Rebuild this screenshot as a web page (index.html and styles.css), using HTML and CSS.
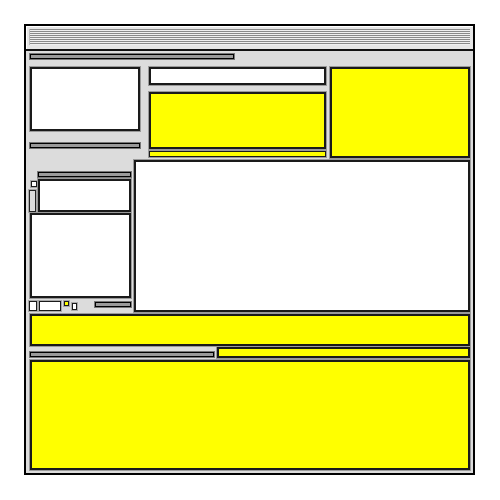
FILE: index.html
```html
<!DOCTYPE html>
<html>
<head>
<meta charset="utf-8">
<link rel="stylesheet" href="styles.css">
</head>
<body>
<div class="window">
  <div class="titlebar"><div class="stripes"></div></div>
  <div class="content">
    <div class="bar topbar"></div>
    <div class="row-b">
      <div class="col-left">
        <div class="box white lbox"></div>
        <div class="bar lbar"></div>
      </div>
      <div class="col-mid">
        <div class="box white input"></div>
        <div class="box yellow mbox"></div>
        <div class="box yellow mbar"></div>
      </div>
      <div class="box yellow rbox"></div>
    </div>
    <div class="row-c">
      <div class="side">
        <div class="sub">
          <div class="strip">
            <div class="tiny sq"></div>
            <div class="tiny tall"></div>
          </div>
          <div class="submain">
            <div class="bar subbar"></div>
            <div class="box white subbox"></div>
          </div>
        </div>
        <div class="box white bigleft"></div>
        <div class="bottomrow">
          <div class="tiny b1"></div>
          <div class="tiny b2"></div>
          <div class="tiny b3"></div>
          <div class="tiny b4"></div>
          <div class="bar b5"></div>
        </div>
      </div>
      <div class="box white main"></div>
    </div>
    <div class="box yellow band"></div>
    <div class="row-e">
      <div class="bar ebar"></div>
      <div class="box yellow eright"></div>
    </div>
    <div class="box yellow bottom"></div>
  </div>
</div>
</body>
</html>
```
FILE: styles.css
```css
* { box-sizing: border-box; }
html, body { margin: 0; padding: 0; background: #fff; }
body { width: 500px; height: 500px; font-family: "Liberation Sans", sans-serif; }

.window {
  margin: 24px 0 0 24px;
  width: 451px;
  height: 451px;
  border: 2px solid #000;
  background: #dcdcdc;
  box-shadow: inset 1px 1px 0 #fff, inset -1px -1px 0 #808080, inset -2px -2px 0 #bbb;
  display: flex;
  flex-direction: column;
}
.titlebar {
  height: 25px;
  background: #e6e6e6;
  border-bottom: 2px solid #111;
  padding: 3px 3px 3px 3px;
  box-shadow: inset 1px 1px 0 #fff;
}
.stripes {
  height: 16px;
  background: repeating-linear-gradient(to bottom, #8a8a8a 0 1px, #f0f0f0 1px 2px);
  border-left: 1px solid #bbb;
}
.content {
  flex: 1;
  padding: 3px 3px 3px 4px;
  display: flex;
  flex-direction: column;
  background: #dcdcdc;
}
.box {
  border: 2px solid #1a1a1a;
  box-shadow: 0 0 0 1px #9a9a9a;
}
.white { background: #fff; }
.yellow { background: #ffff00; }
.bar {
  height: 5px;
  border: 1px solid #000;
  background: #9a9a9a;
  box-shadow: 0 0 0 1px #777;
}
.tiny {
  border: 1px solid #1a1a1a;
  background: #fff;
  box-shadow: 0 0 0 1px #aaa;
}

.topbar { width: 204px; }

.row-b {
  margin-top: 8px;
  height: 91px;
  display: flex;
  gap: 4px;
}
.col-left {
  width: 110px;
  margin-right: 5px;
  display: flex;
  flex-direction: column;
}
.lbox { height: 64px; }
.lbar { margin-top: 12px; }
.col-mid {
  width: 177px;
  display: flex;
  flex-direction: column;
}
.input { height: 18px; }
.mbox { height: 57px; margin-top: 7px; }
.mbar { height: 6px; margin-top: 2px; border-width: 1.5px; }
.rbox { width: 140px; height: 91px; }

.row-c {
  margin-top: 2px;
  height: 152px;
  display: flex;
  gap: 3px;
}
.side {
  width: 102px;
  margin-left: -1px;
  padding-top: 12px;
  display: flex;
  flex-direction: column;
}
.sub { display: flex; height: 40px; }
.strip {
  width: 9px;
  padding-top: 9px;
  display: flex;
  flex-direction: column;
  gap: 3px;
}
.sq { width: 6px; height: 6px; margin-left: 2px; }
.tall { width: 7px; height: 22px; background: #dcdcdc; border-color: #222; }
.submain { flex: 1; display: flex; flex-direction: column; }
.subbar { height: 5px; }
.subbox { height: 33px; margin-top: 2px; }
.bigleft { height: 85px; margin-top: 1px; margin-left: 1px; }
.bottomrow {
  margin-top: 3px;
  height: 10px;
  display: flex;
  align-items: flex-start;
}
.b1 { width: 8px; height: 10px; }
.b2 { width: 23px; height: 10px; margin-left: 2px; }
.b3 { width: 5px; height: 5px; margin-left: 3px; background: #ffff00; }
.b4 { width: 5px; height: 7px; margin-left: 3px; margin-top: 2px; }
.b5 { width: 37px; height: 5px; margin-left: 18px; margin-top: 1px; }
.main { flex: 1; }

.band { height: 32px; margin-top: 2px; }

.row-e {
  margin-top: 1px;
  height: 11px;
  display: flex;
  align-items: flex-end;
  gap: 3px;
}
.ebar { width: 184px; margin-bottom: 1px; }
.eright { flex: 1; height: 11px; }

.bottom { flex: 1; margin-top: 2px; }
```
